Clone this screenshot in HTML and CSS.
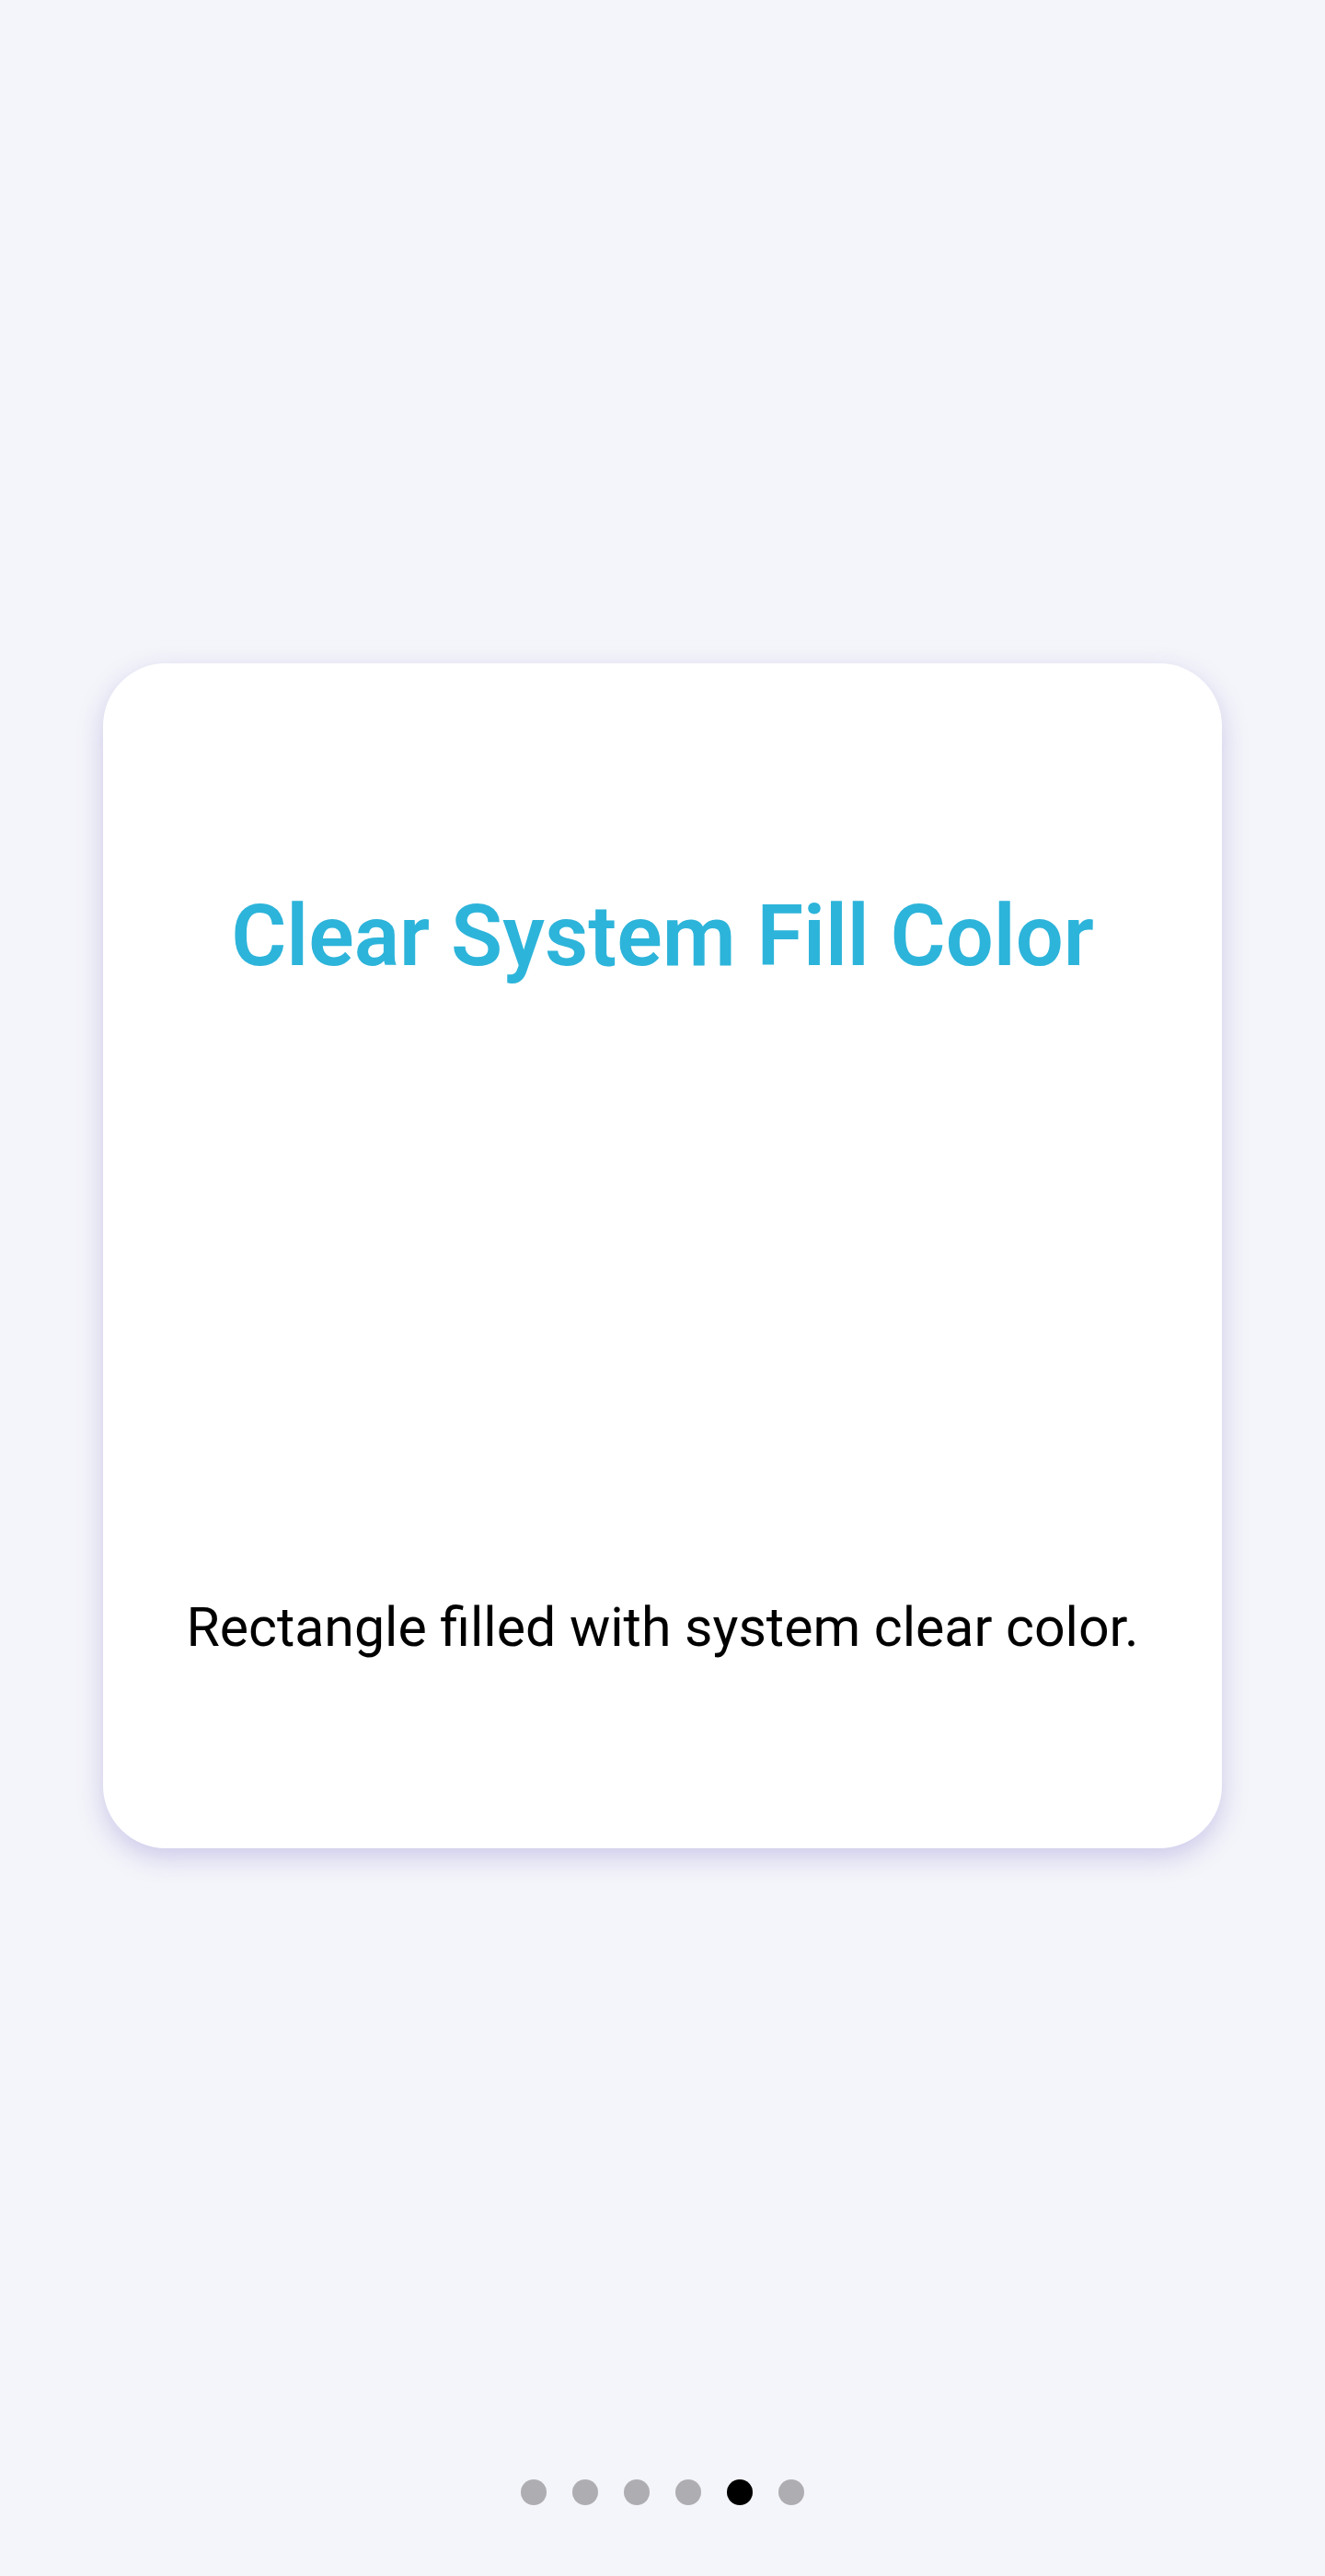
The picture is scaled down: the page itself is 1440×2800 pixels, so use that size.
FILE: index.html
```html
<!DOCTYPE html>
<html lang="en">
<head>
<meta charset="utf-8">
<title>Clear System Fill Color</title>
<link rel="stylesheet" href="styles.css">
</head>
<body>
  <main class="page">
    <section class="card">
      <h1 class="card-title">Clear System Fill Color</h1>
      <div class="card-spacer"></div>
      <p class="card-text">Rectangle filled with system clear color.</p>
    </section>
    <nav class="dots">
      <span class="dot"></span>
      <span class="dot"></span>
      <span class="dot"></span>
      <span class="dot"></span>
      <span class="dot dot-active"></span>
      <span class="dot"></span>
    </nav>
  </main>
</body>
</html>
```

FILE: styles.css
```css
html, body {
  margin: 0;
  padding: 0;
  background: #f4f5fa;
}
body {
  font-family: Roboto, "Liberation Sans", sans-serif;
  width: 1440px;
  height: 2800px;
  overflow: hidden;
}
.page {
  display: flex;
  flex-direction: column;
  align-items: center;
  padding-top: 721px;
}
.card {
  box-sizing: border-box;
  width: 1216px;
  height: 1288px;
  background: #ffffff;
  border-radius: 68px;
  box-shadow: 0 10px 28px rgba(120, 110, 200, 0.32);
  display: flex;
  flex-direction: column;
  align-items: center;
  padding-top: 242px;
}
.card-title {
  margin: 0;
  font-size: 92px;
  line-height: 1.2;
  font-weight: 600;
  color: #2db4da;
  text-align: center;
}
.card-spacer {
  height: 661px;
}
.card-text {
  margin: 0;
  font-size: 59px;
  line-height: 1.2;
  font-weight: 400;
  color: #000000;
  text-align: center;
}
.dots {
  display: flex;
  gap: 28px;
  margin-top: 686px;
}
.dot {
  width: 28px;
  height: 28px;
  border-radius: 50%;
  background: #aeaeb2;
}
.dot-active {
  background: #000000;
}
```
